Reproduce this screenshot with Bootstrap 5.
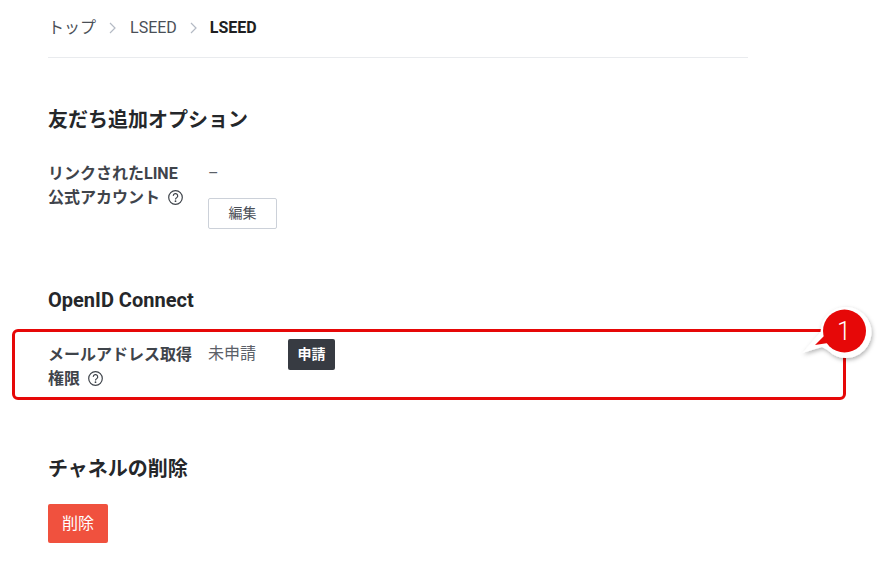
<!DOCTYPE html>
<html lang="ja">
<head>
  <meta charset="UTF-8" />
  <title>LSEED</title>
  <link href="https://cdn.jsdelivr.net/npm/bootstrap@5.3.0/dist/css/bootstrap.min.css" rel="stylesheet">
  <style>
    body {
      font-family: Roboto, "Noto Sans CJK JP", sans-serif;
      background: #fff;
      color: #3c4046;
      font-size: 16px;
    }

    .page-wrap {
      width: 700px;
      margin-left: 48px;
    }

    .crumbs {
      height: 58px;
      border-bottom: 1px solid #e9ebee;
      font-size: 16px;
      color: #4a4f57;
      padding-bottom: 2px;
    }

    .crumbs svg { margin: 0 14px 0 13px; }
    .crumbs strong { color: #1e1f22; font-weight: 700; margin-left: -1px; }

    .sec-title {
      font-size: 20px;
      line-height: 30px;
      font-weight: 700;
      color: #25272a;
      margin: 0;
    }

    .section-one { margin-top: 47px; margin-bottom: 27px; }
    .section-two { margin-top: 56px; margin-bottom: 27px; }
    .section-three { margin-top: 63px; margin-bottom: 20px; }

    .field-label {
      width: 160px;
      font-size: 16px;
      line-height: 24px;
      font-weight: 700;
      color: #3f444b;
    }

    .mail-row .field-label { padding-top: 1px; }

    .field-value {
      font-size: 16px;
      line-height: 24px;
      color: #5b6068;
    }

    .dash-line { margin-bottom: 12px; }
    .help-ico { margin-left: 4px; vertical-align: -2px; }

    .btn-edit {
      display: block;
      width: 69px;
      height: 31px;
      padding: 0;
      font-size: 14px;
      color: #4a4f57;
      background: #fff;
      border: 1px solid #ccd1d9;
      border-radius: 2px;
    }

    .btn-apply {
      width: 47px;
      height: 31px;
      padding: 0;
      margin-left: 32px;
      margin-top: -3px;
      font-size: 14px;
      font-weight: 700;
      color: #fff;
      background: #373b42;
      border: 0;
      border-radius: 2px;
    }

    .btn-remove {
      display: block;
      width: 60px;
      height: 39px;
      padding: 0;
      font-size: 16px;
      color: #fff;
      background: #f0513e;
      border: 0;
      border-radius: 2px;
    }

    .mail-row { position: relative; }

    .mark-box {
      position: absolute;
      left: -36px;
      top: -13px;
      width: 834px;
      height: 71px;
      border: 3px solid #e60808;
      border-radius: 6px;
      pointer-events: none;
    }

    .mark-bubble {
      position: absolute;
      left: 750px;
      top: -44px;
      width: 80px;
      height: 70px;
      overflow: visible;
    }

    .mark-num {
      position: absolute;
      left: 781px;
      top: -25px;
      width: 30px;
      text-align: center;
      font-size: 25px;
      line-height: 30px;
      font-weight: 300;
      color: #fff;
    }
  </style>
</head>
<body>
  <div class="page-wrap">
    <nav class="crumbs d-flex align-items-center">
      <span>トップ</span>
      <svg width="7" height="12" viewBox="0 0 7 12"><path d="M1 1l5 5-5 5" fill="none" stroke="#b4bac4" stroke-width="1.2"/></svg>
      <span>LSEED</span>
      <svg width="7" height="12" viewBox="0 0 7 12"><path d="M1 1l5 5-5 5" fill="none" stroke="#b4bac4" stroke-width="1.2"/></svg>
      <strong>LSEED</strong>
    </nav>

    <h2 class="sec-title section-one">友だち追加オプション</h2>
    <div class="d-flex">
      <div class="field-label">リンクされたLINE<br>公式アカウント
        <svg class="help-ico" width="15" height="15" viewBox="0 0 15 15"><circle cx="7.5" cy="7.5" r="6.8" fill="none" stroke="#3f444b" stroke-width="1.2"/><path d="M5.3 5.9a2.2 2.2 0 1 1 3.3 1.8c-.8.4-1.1.8-1.1 1.7" fill="none" stroke="#3f444b" stroke-width="1.2"/><circle cx="7.5" cy="11.2" r=".9" fill="#3f444b"/></svg>
      </div>
      <div class="field-value">
        <div class="dash-line">&ndash;</div>
        <button class="btn btn-edit" type="button">編集</button>
      </div>
    </div>

    <h3 class="sec-title section-two">OpenID Connect</h3>
    <div class="d-flex mail-row">
      <div class="field-label">メールアドレス取得<br>権限
        <svg class="help-ico" width="15" height="15" viewBox="0 0 15 15"><circle cx="7.5" cy="7.5" r="6.8" fill="none" stroke="#3f444b" stroke-width="1.2"/><path d="M5.3 5.9a2.2 2.2 0 1 1 3.3 1.8c-.8.4-1.1.8-1.1 1.7" fill="none" stroke="#3f444b" stroke-width="1.2"/><circle cx="7.5" cy="11.2" r=".9" fill="#3f444b"/></svg>
      </div>
      <div class="field-value">未申請</div>
      <div><button class="btn btn-apply" type="button">申請</button></div>
      <div class="mark-box"></div>
      <svg class="mark-bubble" viewBox="0 0 80 70">
        <defs><filter id="bubbleShadow" x="-20%" y="-20%" width="140%" height="140%"><feDropShadow dx="1" dy="2" stdDeviation="2" flood-color="#000" flood-opacity=".3"/></filter></defs>
        <path filter="url(#bubbleShadow)" d="M4.7 54.7 L22.5 34 A25.5 25.5 0 1 1 29.5 52 L24 49 Z" fill="#fff"/>
        <circle cx="46.5" cy="33" r="21.5" fill="#e60808"/>
        <path d="M17 47 L28 36 L30 45 Z" fill="#e60808"/>
      </svg>
      <div class="mark-num">1</div>
    </div>

    <h3 class="sec-title section-three">チャネルの削除</h3>
    <button class="btn btn-remove" type="button">削除</button>
  </div>
</body>
</html>
